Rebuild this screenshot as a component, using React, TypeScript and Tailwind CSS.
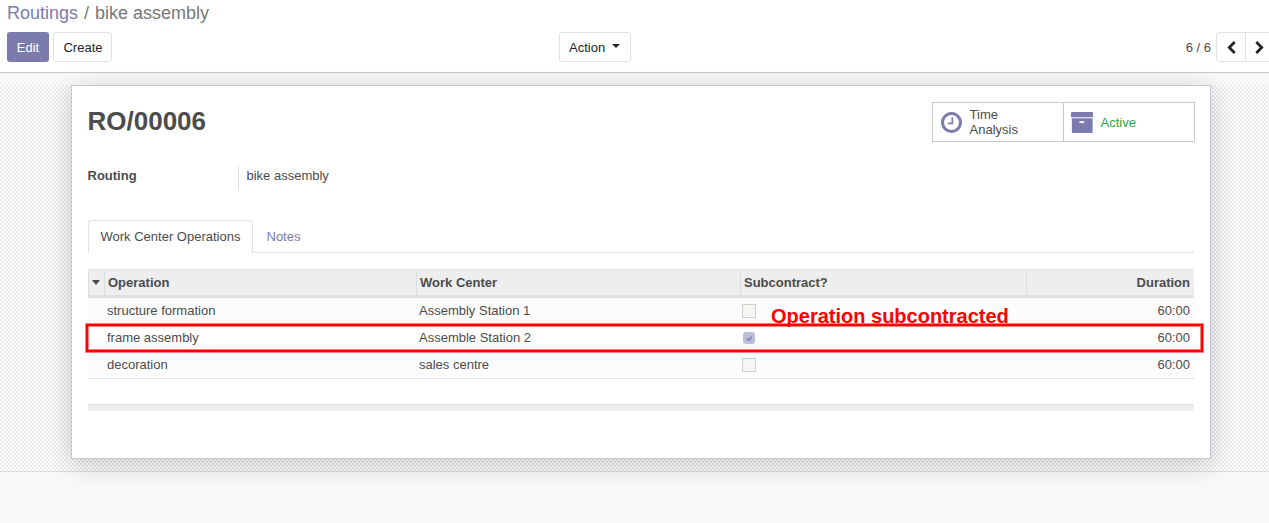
import React from "react";

const operations = [
  { name: "structure formation", center: "Assembly Station 1", sub: false, duration: "60:00" },
  { name: "frame assembly", center: "Assemble Station 2", sub: true, duration: "60:00" },
  { name: "decoration", center: "sales centre", sub: false, duration: "60:00" },
];

const gridCols = "grid grid-cols-[16px_312px_324px_286px_168px]";

function ClockIcon() {
  return (
    <svg viewBox="0 128 1536 1536" className="h-[21px] w-[21px] shrink-0 fill-[#7c7bad]">
      <path d="M896 544v448q0 14-9 23t-23 9h-320q-14 0-23-9t-9-23v-64q0-14 9-23t23-9h224v-352q0-14 9-23t23-9h64q14 0 23 9t9 23zm416 352q0-148-73-273t-198-198-273-73-273 73-198 198-73 273 73 273 198 198 273 73 273-73 198-198 73-273zm224 0q0 209-103 385.5t-279.5 279.5-385.5 103-385.5-103-279.5-279.5-103-385.5 103-385.5 279.5-279.5 385.5-103 385.5 103 279.5 279.5 103 385.5z" />
    </svg>
  );
}

function ArchiveIcon() {
  return (
    <svg viewBox="64 128 1664 1536" className="h-[21px] w-[22.5px] shrink-0 fill-[#7c7bad]">
      <path d="M1056 864q0-26-19-45t-45-19h-256q-26 0-45 19t-19 45 19 45 45 19h256q26 0 45-19t19-45zm608-224v960q0 26-19 45t-45 19h-1408q-26 0-45-19t-19-45v-960q0-26 19-45t45-19h1408q26 0 45 19t19 45zm64-448v256q0 26-19 45t-45 19h-1536q-26 0-45-19t-19-45v-256q0-26 19-45t45-19h1536q26 0 45 19t19 45z" />
    </svg>
  );
}

function Chevron({ right = false }: { right?: boolean }) {
  return (
    <svg viewBox="384 0 1080 1664" className={right ? "h-[13px] w-[9px] -scale-x-100 fill-[#212529]" : "h-[13px] w-[9px] fill-[#212529]"}>
      <path d="M1427 301l-531 531 531 531q19 19 19 45t-19 45l-166 166q-19 19-45 19t-45-19l-742-742q-19-19-19-45t19-45l742-742q19-19 45-19t45 19l166 166q19 19 19 45t-19 45z" />
    </svg>
  );
}

function Checkbox({ checked }: { checked: boolean }) {
  if (checked) {
    return (
      <span className="ml-[3px] flex h-3 w-3 items-center justify-center rounded-[3px] bg-[#bebdd9]">
        <svg viewBox="0 0 8 8" className="h-[7px] w-[7px] fill-none stroke-[#7c7bad] stroke-[1.8]">
          <path d="M1.2 4.2L3.2 6L6.8 2" />
        </svg>
      </span>
    );
  }
  return <span className="ml-[2px] h-[14px] w-[14px] border border-[#cfcfcb] bg-[#f6f6f4]" />;
}

export default function App() {
  return (
    <div className="flex h-[523px] w-[1269px] flex-col overflow-hidden bg-[#f9f9f9] font-['Liberation_Sans',sans-serif] text-[13px] leading-[19px] text-[#4c4c4c]">
      <header className="h-[73px] shrink-0 border-b border-[#c9c9cb] bg-white">
        <div className="h-8 pl-[7px] pt-[1px] text-[18px] leading-6 text-[#777]">
          <span className="text-[#7c7bad]">Routings</span>
          <span className="px-[6px]">/</span>
          <span>bike assembly</span>
        </div>
        <div className="flex h-[30px] items-stretch">
          <div className="flex w-[559px] gap-1 pl-[7px]">
            <button className="w-[42px] rounded-[3px] bg-[#7c7bad] text-white">Edit</button>
            <button className="w-[59px] rounded-[3px] border border-[#dee2e6] pl-px text-[#212529]">Create</button>
          </div>
          <button className="flex w-[72px] items-center rounded-[3px] border border-[#dee2e6] pl-[9px] text-[#212529]">
            Action
            <span className="mb-[3px] ml-[6.5px] border-x-4 border-t-4 border-x-transparent border-t-[#212529]" />
          </button>
          <div className="flex flex-1 items-center justify-end pr-[5px]">6 / 6</div>
          <div className="flex w-[53px] shrink-0 overflow-hidden">
            <button className="flex w-[30px] shrink-0 items-center justify-center rounded-l-[3px] border border-[#dee2e6]">
              <Chevron />
            </button>
            <button className="-ml-px flex w-[30px] shrink-0 items-center border border-[#dee2e6] pl-[9px]">
              <Chevron right />
            </button>
          </div>
        </div>
      </header>

      <div className="h-3 shrink-0" />
      <main className="h-[387px] shrink-0 border-b border-[#dcdcdc] bg-[conic-gradient(#ebebeb_25%,#fff_0_50%,#ebebeb_0_75%,#fff_0)] bg-[length:4px_4px] pl-[71px]">
        <section className="h-[374px] w-[1140px] border border-[#c8c8d3] bg-white px-4 shadow-[0_5px_25px_rgba(0,0,0,0.2)]">
          <div className="flex justify-between pt-4">
            <h1 className="-ml-[0.5px] pt-1 text-[26px] font-bold leading-[31px]">RO/00006</h1>
            <div className="-mr-px flex h-10 w-[263px] border border-[#c9c9c9] leading-[15px]">
              <div className="flex w-[131px] items-center border-r border-[#c9c9c9] pl-[7.6px]">
                <ClockIcon />
                <span className="ml-2">Time<br />Analysis</span>
              </div>
              <div className="flex items-center pl-[6.8px]">
                <ArchiveIcon />
                <span className="ml-[7.2px] text-[#28a745]">Active</span>
              </div>
            </div>
          </div>

          <div className="mt-6 flex h-6">
            <div className="-ml-[0.5px] w-[150.5px] font-bold">Routing</div>
            <div className="border-l border-[#dcdcdc] pl-[7.5px]">bike assembly</div>
          </div>

          <div className="mt-[30px] flex h-[33px] w-[1106px] border-b border-[#dee2e6]">
            <div className="h-[33px] w-[165px] rounded-t-[3px] border border-b-0 border-[#dee2e6] bg-white pl-[11.5px] pt-[6px]">Work Center Operations</div>
            <div className="pl-[13.5px] pt-[7px] text-[#7c7bad]">Notes</div>
          </div>

          <div className="mt-4 w-[1106px]">
            <div className={`${gridCols} h-[29px] border-b-[3px] border-t border-b-[#dee2e6] border-t-[#dee2e6] bg-[#eee] font-bold leading-[26px]`}>
              <div className="flex items-center justify-center border-l border-[#dcdfe2] pb-[2px] pr-px">
                <span className="border-x-[4px] border-t-[5px] border-x-transparent border-t-[#4c4c4c]" />
              </div>
              <div className="border-l border-[#dcdfe2] pl-[3px]">Operation</div>
              <div className="border-l border-[#dcdfe2] pl-[3px]">Work Center</div>
              <div className="border-l border-[#dcdfe2] pl-[3px]">Subcontract?</div>
              <div className="border-l border-[#dcdfe2] pr-1 text-right">Duration</div>
            </div>
            <div className="relative">
              {operations.map((op) => (
                <div key={op.name} className={`${gridCols} h-[27px] border-[#dee2e6] leading-[26px] odd:bg-[#fcfcfc] [&:nth-child(3)]:border-b`}>
                  <span />
                  <span className="pl-[3px]">{op.name}</span>
                  <span className="pl-[3px]">{op.center}</span>
                  <span className="flex h-[26px] items-center">
                    <Checkbox checked={op.sub} />
                  </span>
                  <span className="pr-1 text-right">{op.duration}</span>
                </div>
              ))}
              <div className="absolute -left-[2px] top-[26px] h-[28px] w-[1117px] border-2 border-[#f00] shadow-[0_0_0_1px_rgba(255,0,0,0.5),inset_0_0_0_1px_rgba(255,0,0,0.5)]" />
              <div className="absolute left-[683px] top-[6px] whitespace-nowrap text-[20px] font-bold leading-6 text-[#f00]">Operation subcontracted</div>
            </div>
            <div className="h-[25px]" />
            <div className="h-[7px] border-t border-[#dadde1] bg-[#eee]" />
          </div>
        </section>
      </main>
    </div>
  );
}
